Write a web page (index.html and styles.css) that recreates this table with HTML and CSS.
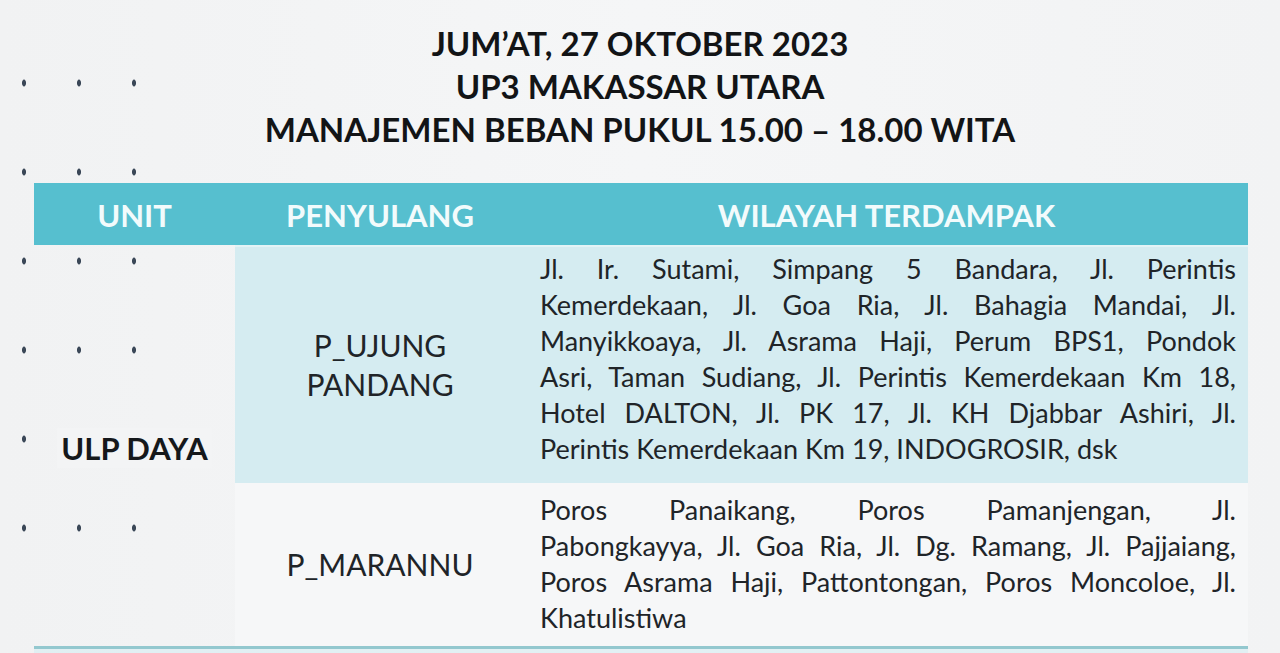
FILE: index.html
```html
<!DOCTYPE html>
<html lang="id">
<head>
<meta charset="utf-8">
<title>Manajemen Beban UP3 Makassar Utara</title>
<link rel="stylesheet" href="styles.css">
</head>
<body>
<div class="page">
  <header class="title">
    <div class="title-line">JUM’AT, 27 OKTOBER 2023</div>
    <div class="title-line">UP3 MAKASSAR UTARA</div>
    <div class="title-line">MANAJEMEN BEBAN PUKUL 15.00 – 18.00 WITA</div>
  </header>

  <div class="table">
    <div class="th">UNIT</div>
    <div class="th">PENYULANG</div>
    <div class="th">WILAYAH TERDAMPAK</div>

    <div class="unit"><span class="unit-name">ULP DAYA</span></div>

    <div class="feeder row-a"><span>P_UJUNG</span><span>PANDANG</span></div>
    <div class="area row-a">
      <span class="ln">Jl. Ir. Sutami, Simpang 5 Bandara, Jl. Perintis</span>
      <span class="ln">Kemerdekaan, Jl. Goa Ria, Jl. Bahagia Mandai, Jl.</span>
      <span class="ln">Manyikkoaya, Jl. Asrama Haji, Perum BPS1, Pondok</span>
      <span class="ln">Asri, Taman Sudiang, Jl. Perintis Kemerdekaan Km 18,</span>
      <span class="ln">Hotel DALTON, Jl. PK 17, Jl. KH Djabbar Ashiri, Jl.</span>
      <span class="ln last">Perintis Kemerdekaan Km 19, INDOGROSIR, dsk</span>
    </div>

    <div class="feeder row-b"><span>P_MARANNU</span></div>
    <div class="area row-b">
      <span class="ln">Poros Panaikang, Poros Pamanjengan, Jl.</span>
      <span class="ln">Pabongkayya, Jl. Goa Ria, Jl. Dg. Ramang, Jl. Pajjaiang,</span>
      <span class="ln">Poros Asrama Haji, Pattontongan, Poros Moncoloe, Jl.</span>
      <span class="ln last">Khatulistiwa</span>
    </div>

    <div class="next"></div>
  </div>
</div>
</body>
</html>
```

FILE: styles.css
```css
* { box-sizing: border-box; }

html, body {
  margin: 0;
  padding: 0;
}

body {
  width: 1280px;
  height: 653px;
  overflow: hidden;
  background: linear-gradient(90deg, #f1f2f3 0%, #f5f6f7 50%, #f2f3f4 100%);
  font-family: Lato, "Open Sans", sans-serif;
  color: #2b2f34;
}

.page {
  position: relative;
  width: 1280px;
  height: 653px;
}

.page::before {
  content: "";
  position: absolute;
  left: 0;
  top: 0;
  width: 165px;
  height: 534px;
  background-image: radial-gradient(2.3px 4px at 24px 83px, #3a4757 70%, rgba(58,71,87,0) 100%);
  background-size: 55px 89px;
  background-repeat: repeat;
  z-index: 0;
}

.title {
  position: relative;
  z-index: 1;
  padding-top: 22px;
  text-align: center;
  font-weight: 700;
  font-size: 33px;
  line-height: 43px;
  color: #121416;
}

.table {
  position: relative;
  z-index: 1;
  margin: 32px 0 0 34px;
  width: 1214px;
  display: grid;
  grid-template-columns: 201px 290px 723px;
  grid-template-rows: 62px 238px 166px 10px;
}

.th {
  background: #56bfcf;
  color: #f2fbfc;
  font-weight: 700;
  font-size: 31px;
  display: flex;
  align-items: center;
  justify-content: center;
  padding-top: 2px;
}

.unit {
  grid-column: 1;
  grid-row: 2 / span 2;
  display: flex;
  align-items: center;
  justify-content: center;
  font-weight: 700;
  font-size: 31px;
  color: #15181b;
  padding-top: 4px;
  border-bottom: 3px solid #93c8cf;
}

.unit-name {
  background: #f3f4f5;
  padding: 0 4px;
  line-height: 40px;
}

.row-a {
  background: #d5ecf1;
  border-top: 2px solid #e3f3f6;
}

.row-b {
  background: #f6f7f8;
  border-bottom: 3px solid #93c8cf;
}

.feeder {
  display: flex;
  flex-direction: column;
  align-items: center;
  justify-content: center;
  font-size: 30px;
  line-height: 39px;
  color: #202428;
}

.area {
  padding: 4px 12px 0 15px;
  font-size: 27px;
  line-height: 36px;
  color: #202428;
}

.row-b.area {
  padding-top: 9px;
}

.ln {
  display: block;
  white-space: nowrap;
  text-align: justify;
  text-align-last: justify;
}

.ln.last {
  text-align-last: left;
}

.next {
  grid-column: 1 / span 3;
  background: #d5ecf1;
  opacity: 0.6;
}
```
